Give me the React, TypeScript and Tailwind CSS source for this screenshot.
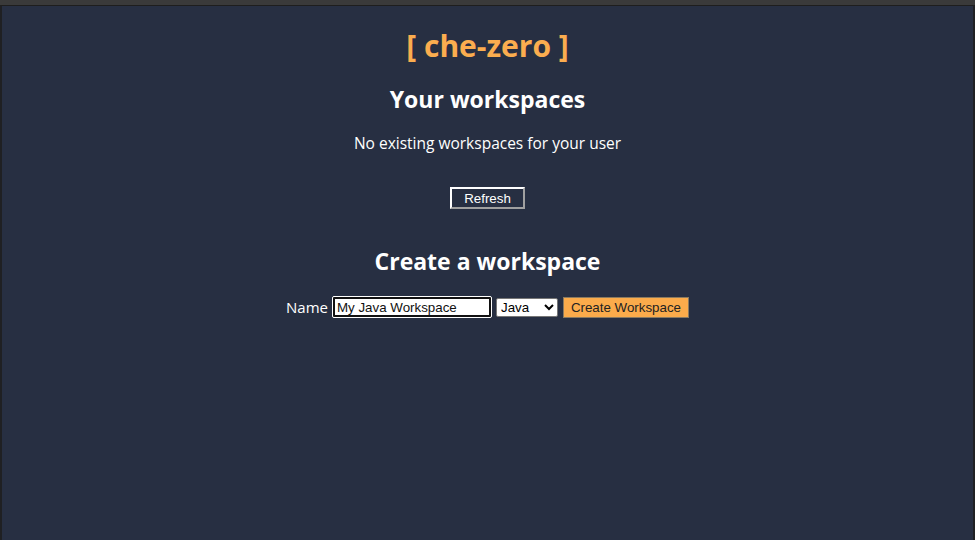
import React from 'react';

export default function App() {
  return (
    <div className="w-[975px] h-[540px] bg-[#3a3a3a] pt-[5px] overflow-hidden">
      <div className="h-[535px] border-t border-[#1e1e1e] border-l-2 border-r-2 border-l-[#1f2023] border-r-[#1f2023] bg-[#272f42] text-white flex flex-col items-center font-['Open_Sans',sans-serif]">
        {/* Header */}
        <h1 className="mt-[22px] text-[30px] leading-[36px] font-bold text-[#fbad4f]">[ che-zero ]</h1>

        <h2 className="mt-[20px] text-[23px] leading-[30px] font-bold">Your workspaces</h2>
        <p className="mt-[18px] text-[15.5px] leading-[22px]">No existing workspaces for your user</p>

        <button className="mt-[33px] w-[75px] h-[22px] border-2 border-t-white border-l-white border-b-[#a0a0a0] border-r-[#a0a0a0] bg-transparent text-white text-[13.33px] leading-[15px] font-['Liberation_Sans',Arial,sans-serif]">
          Refresh
        </button>

        <h2 className="mt-[37px] text-[23px] leading-[30px] font-bold">Create a workspace</h2>

        {/* Create form */}
        <div className="mt-[20px] flex items-center">
          <label className="text-[15px] leading-[22px]">Name</label>
          <input
            defaultValue="My Java Workspace"
            className="ml-[4px] w-[160px] h-[22px] bg-white text-[#111] px-[4px] text-[13.33px] border border-white outline outline-2 outline-[#111] outline-offset-[-3px] rounded-[2px] font-['Liberation_Sans',Arial,sans-serif]"
          />
          <select className="ml-[4px] w-[62px] h-[19px] bg-white text-black text-[13.33px] border border-[#767676] rounded-[2px] font-['Liberation_Sans',Arial,sans-serif]">
            <option>Java</option>
          </select>
          <button className="ml-[5px] w-[126px] h-[21px] bg-[#fbab4b] text-[#222] text-[13.33px] leading-[15px] border border-[#8a7a60] font-['Liberation_Sans',Arial,sans-serif]">
            Create Workspace
          </button>
        </div>
      </div>
    </div>
  );
}
